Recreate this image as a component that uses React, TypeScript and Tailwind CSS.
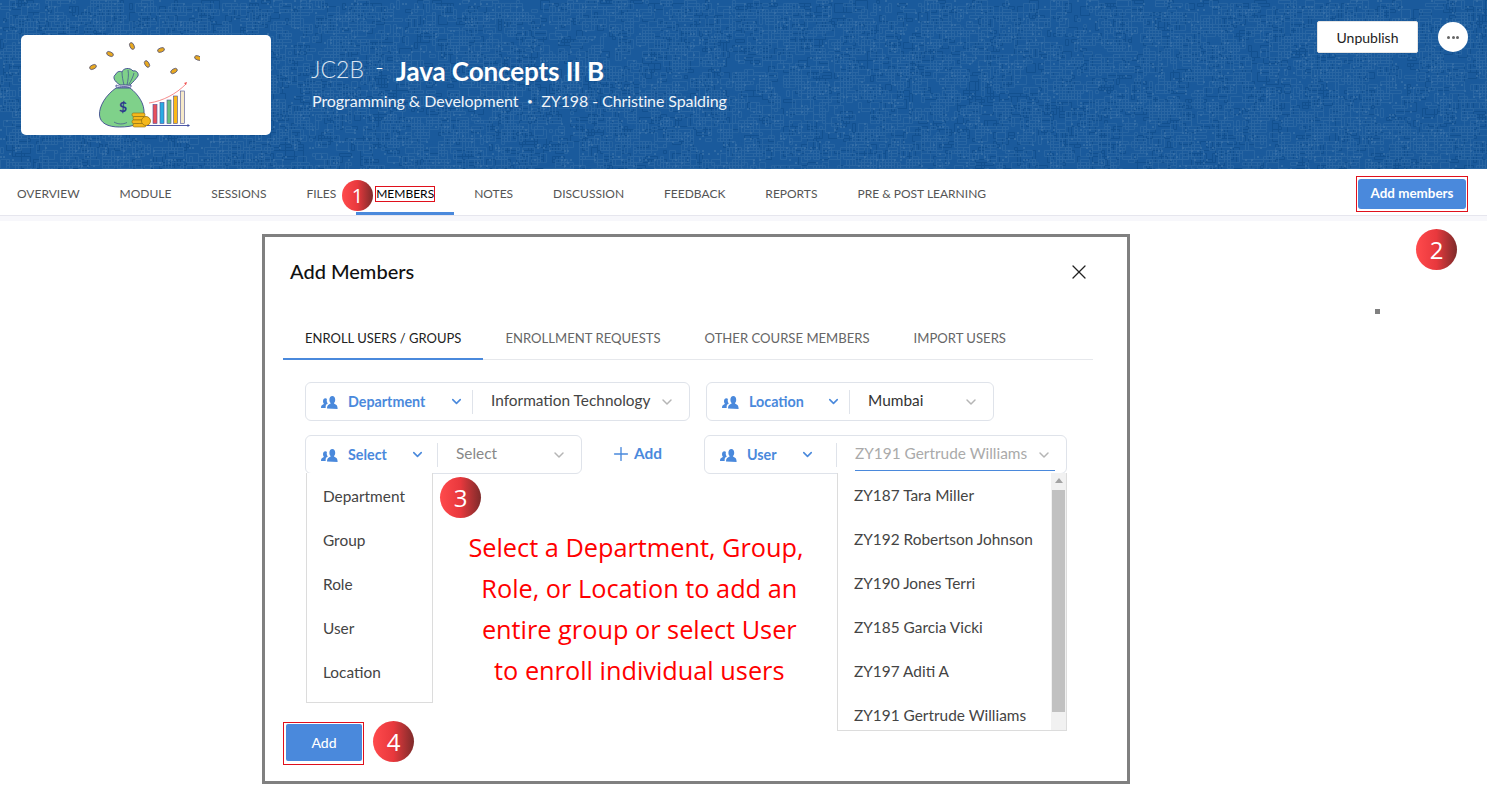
import { useMemo } from "react";
import { ChevronDown, Plus, X } from "lucide-react";

const navItems = ["OVERVIEW", "MODULE", "SESSIONS", "FILES", "MEMBERS", "NOTES", "DISCUSSION", "FEEDBACK", "REPORTS", "PRE & POST LEARNING"];
const tabs = ["ENROLL USERS / GROUPS", "ENROLLMENT REQUESTS", "OTHER COURSE MEMBERS", "IMPORT USERS"];
const typeOptions = ["Department", "Group", "Role", "User", "Location"];
const userOptions = ["ZY187 Tara Miller", "ZY192 Robertson Johnson", "ZY190 Jones Terri", "ZY185 Garcia Vicki", "ZY197 Aditi A", "ZY191 Gertrude Williams"];

// maze-like weave on the banner, seeded so it stays the same on every render
const makeTexture = () => {
  let seed = 11;
  const rnd = (n: number) => {
    seed = (seed * 16807) % 2147483647;
    return seed % n;
  };
  let light = "";
  let dark = "";
  let dots = "";
  for (let i = 0; i < 9000; i++) {
    const x = rnd(496) * 3;
    const y = rnd(57) * 3;
    if (i % 4 === 0) {
      dots += `M${x} ${y}h2v2h-2z`;
      continue;
    }
    const w = 3 + rnd(4) * 3;
    const h = 3 + rnd(3) * 3;
    const d = `M${x}.5 ${y}.5h${w}v${h}h-${w}z`;
    if (i % 4 === 1) dark += d;
    else light += d;
  }
  return { light, dark, dots };
};

const BannerTexture = () => {
  const { light, dark, dots } = useMemo(makeTexture, []);
  return (
    <svg className="absolute inset-0 h-full w-full" width="1487" height="169" aria-hidden="true">
      <path d={dark} fill="none" stroke="#12508f" strokeWidth="1" />
      <path d={light} fill="none" stroke="#2c68a4" strokeWidth="1" strokeOpacity="0.8" />
      <path d={dots} fill="#3a72aa" fillOpacity="0.7" />
    </svg>
  );
};

const Coin = ({ x, y, r }: { x: number; y: number; r: number }) => (
  <ellipse cx={x} cy={y} rx="3.6" ry="2.1" transform={`rotate(${r} ${x} ${y})`} fill="#e9a91f" stroke="#5a5a7a" strokeWidth="0.8" />
);

const CourseArt = () => (
  <svg width="130" height="100" viewBox="0 0 130 100" fill="none" aria-hidden="true">
    <Coin x={23} y={32} r={-25} />
    <Coin x={40} y={19} r={25} />
    <Coin x={62} y={11} r={65} />
    <Coin x={91} y={15} r={-20} />
    <Coin x={77} y={29} r={60} />
    <Coin x={104} y={36} r={-30} />
    <Coin x={128} y={23} r={20} />
    <path d="M50 50C44 46 42 42 46 39c1-3 5-3 6-2 1-4 8-5 11-1 3-1 6 2 5 5-2 3-5 6-8 9z" fill="#7fd18a" stroke="#3d4a8f" strokeWidth="0.9" />
    <path d="M52 37c0 4 1 9 2 13M58 35c1 5 0 10-1 15M64 38c-1 4-3 8-5 11" stroke="#3d4a8f" strokeWidth="0.7" />
    <path d="M46 50c4 2 12 2 15 0l0 2c-3 1-11 1-15 0z" fill="#fff" stroke="#3d4a8f" strokeWidth="0.8" />
    <path d="M46 53C36 60 29 71 29.500 80c.5 8 8 12 20 12 14 0 23-3 24.500-13 1-10-6-20-14-26z" fill="#7fd18a" stroke="#3d4a8f" strokeWidth="0.9" />
    <path d="M44 87c4 2.500 9 2.500 13 .5" stroke="#3d4a8f" strokeWidth="0.7" />
    <text x="53" y="77" textAnchor="middle" fontSize="14" fontWeight="700" fill="#2c3a8c" fontFamily="Lato, sans-serif">$</text>
    <rect x="62" y="78" width="13" height="3.500" rx="1.500" fill="#f5b81c" stroke="#8a6a10" strokeWidth="0.6" />
    <rect x="63" y="81.500" width="13" height="3.500" rx="1.500" fill="#f5b81c" stroke="#8a6a10" strokeWidth="0.6" />
    <rect x="62" y="85" width="13" height="3.500" rx="1.500" fill="#f5b81c" stroke="#8a6a10" strokeWidth="0.6" />
    <rect x="63" y="88.500" width="13" height="3.500" rx="1.500" fill="#f5b81c" stroke="#8a6a10" strokeWidth="0.6" />
    <circle cx="76" cy="86" r="4.500" fill="#f5b81c" stroke="#8a6a10" strokeWidth="0.7" />
    <path d="M79 68c14-2 27-9 37-19" stroke="#f57f7f" strokeWidth="0.9" />
    <path d="M117 47l-3 1 2 2z" fill="#f05050" />
    <rect x="83" y="69.500" width="4" height="19" fill="#e8505b" stroke="#4a4f96" strokeWidth="0.6" />
    <rect x="90" y="67.500" width="4" height="21" fill="#29abe2" stroke="#4a4f96" strokeWidth="0.6" />
    <rect x="97" y="65" width="4" height="23.500" fill="#6cc07c" stroke="#4a4f96" strokeWidth="0.6" />
    <rect x="103.500" y="61" width="4" height="27.500" fill="#fbb917" stroke="#4a4f96" strokeWidth="0.6" />
    <rect x="110.500" y="56" width="4" height="32.500" fill="#f6e9c8" stroke="#4a4f96" strokeWidth="0.6" />
    <path d="M77 90.500h42" stroke="#3d4a9f" strokeWidth="0.9" />
    <path d="M120 90.500l-2.500-1.500v3z" fill="#3d4a9f" />
  </svg>
);

const PeopleIcon = () => (
  <svg width="17" height="14" viewBox="0 0 17 14" fill="#4a89dc" className="shrink-0" aria-hidden="true">
    <path d="M6 13.500c0-2 .6-3.400 2-4 1-.4 1.600-.8 1.700-1.400-.9-.8-1.300-2-1.300-3.400C8.400 2.500 9.500 1 11.300 1s2.900 1.500 2.900 3.700c0 1.400-.4 2.600-1.300 3.400.1.600.7 1 1.700 1.400 1.400.6 2 2 2 4.500z" />
    <path d="M0 13c0-1.800.5-2.700 1.600-3.200.7-.3 1.200-.6 1.300-1-.6-.7-.9-1.500-.9-2.600C2 4.500 3 3.300 4.400 3.300c.6 0 1.100.2 1.600.6-.2.4-.3.9-.3 1.400 0 1.200.3 2.300 1 3.100-.1.300-.4.500-1 .8C4.600 9.900 4.600 11 4.700 13z" />
  </svg>
);

type PickerProps = {
  label: string;
  value: string;
  width: string;
  typeWidth: string;
  valueClass?: string;
  underline?: boolean;
  children?: React.ReactNode;
};

const Picker = ({ label, value, width, typeWidth, valueClass = "text-[#444]", underline, children }: PickerProps) => (
  <div className={`relative flex h-[39px] items-center rounded-[6px] border border-[#dfe3ea] bg-white ${width}`}>
    <div className={`flex h-[24px] shrink-0 items-center border-r border-[#dfe3ea] pl-[15px] ${typeWidth}`}>
      <PeopleIcon />
      <span className="ml-[10px] text-[14.300px] font-bold text-[#4a89dc]">{label}</span>
      <ChevronDown className="ml-auto h-[15px] w-[15px] text-[#4a89dc]" strokeWidth={2.5} />
    </div>
    <div className="relative flex h-full min-w-0 flex-1 items-center pl-[18px] pr-[14px]">
      <span className={`whitespace-nowrap pb-[1px] text-[15.400px] ${valueClass}`}>{value}</span>
      <ChevronDown className="ml-auto h-[16px] w-[16px] shrink-0 text-[#b5b5b5]" strokeWidth={2.2} />
      {underline && <div className="absolute bottom-[2px] left-[18px] right-[11px] h-px bg-[#4a89dc]" />}
    </div>
    {children}
  </div>
);

const StepBadge = ({ n, className }: { n: number; className: string }) => (
  <div className={`absolute flex items-center justify-center rounded-full bg-gradient-to-r from-[#ff4a4c] via-[#e8383d] to-[#7e2a2a] font-['Open_Sans',sans-serif] text-white ${className}`}>
    {n}
  </div>
);

export default function App() {
  return (
    <div className="relative h-[808px] w-[1487px] overflow-hidden bg-white [font-family:Lato,sans-serif]">
      <header className="relative flex h-[169px] bg-[#1a5a9c] pl-[21px] pt-[35px]">
        <BannerTexture />
        <div className="relative flex h-[100px] w-[250px] items-center rounded-[5px] bg-white pl-[49px]">
          <CourseArt />
        </div>
        <div className="relative ml-[40px] pt-[18px]">
          <div className="flex items-center text-white">
            <span className="-translate-y-[2px] text-[23px] font-light text-[#dbe5f1]">JC2B</span>
            <span className="ml-[11px] -translate-y-[4px] text-[24px] font-light">-</span>
            <span className="ml-[12px] text-[26px] font-bold leading-[36px] tracking-[-0.1px]">Java Concepts II B</span>
          </div>
          <div className="ml-[1px] flex items-center text-[16px] tracking-[-0.05px] text-[#eef3f9]">
            <span>Programming &amp; Development</span>
            <span className="mx-[8.500px] text-[10px]">•</span>
            <span className="tracking-[-0.1px]">ZY198 - Christine Spalding</span>
          </div>
        </div>
        <div className="relative ml-auto mr-[19px] -mt-[14px] flex h-[32px] items-center gap-[20px]">
          <button className="h-[32px] w-[101px] rounded-[2px] border border-[#e4e4e4] bg-white text-[14px] text-[#222]">Unpublish</button>
          <div className="flex h-[30px] w-[30px] items-center justify-center gap-[1.500px] rounded-full bg-white">
            <span className="h-[3px] w-[3px] rounded-full bg-[#666]" />
            <span className="h-[3px] w-[3px] rounded-full bg-[#666]" />
            <span className="h-[3px] w-[3px] rounded-full bg-[#666]" />
          </div>
        </div>
      </header>

      <nav className="flex h-[47px] items-center justify-between border-b border-[#e6e6ee] pl-[17px] pr-[19px] pt-[3px]">
        <div className="flex h-full items-center gap-10">
          {navItems.map((item) =>
            item === "MEMBERS" ? (
              <div key={item} className="-mx-5 flex h-full items-center border-b-[3px] border-[#4a89dc] px-5 pt-[3px]">
                <span className="text-[12px] leading-[14px] text-black outline outline-1 outline-[#e0101c]">{item}</span>
              </div>
            ) : (
              <span key={item} className="whitespace-nowrap text-[12px] text-[#555]">{item}</span>
            )
          )}
        </div>
        <div className="flex h-[36px] w-[112px] items-center justify-center border border-[#e0101c]">
          <button className="h-[30px] w-[108px] rounded-[3px] bg-[#4a89dc] text-[13.400px] font-bold text-white">Add members</button>
        </div>
      </nav>
      <div className="h-[5px] bg-[#f7f7fb]" />

      <section className="relative ml-[262px] mt-[13px] flex h-[550px] w-[868px] flex-col border-[3px] border-[#808080] bg-white pl-[18px] pr-[34px]">
        <div className="flex items-center justify-between pl-[7px] pt-[19px]">
          <h2 className="text-[20px] font-medium leading-[30px] text-[#111]">Add Members</h2>
          <X className="mr-[2px] h-[24px] w-[24px] translate-y-[1px] text-[#222]" strokeWidth={1.3} />
        </div>
        <div className="mt-[34px] flex h-[40px] border-b border-[#e6e8ec]">
          {tabs.map((tab, i) => (
            <div key={tab} className={`-mb-px flex h-[40px] items-center whitespace-nowrap border-b-2 px-[22px] ${i === 0 ? "border-[#4a89dc] text-[13px] text-[#222]" : "border-transparent text-[13.100px] text-[#666]"}`}>
              {tab}
            </div>
          ))}
        </div>

        <div className="mt-[22px] flex gap-[16px] pl-[22px]">
          <Picker label="Department" value="Information Technology" width="w-[385px]" typeWidth="w-[167px] pr-[8px]" />
          <Picker label="Location" value="Mumbai" width="w-[288px]" typeWidth="w-[143px] pr-[8px]" valueClass="text-[#333]" />
        </div>

        <div className="mt-[14px] flex pl-[22px]">
          <Picker label="Select" value="Select" width="w-[277px]" typeWidth="w-[132px] pr-[12px]" valueClass="text-[#888]">
            <ul className="absolute left-0 top-full w-[127px] border border-t-0 border-[#dcdcdc] bg-white pb-[7px] pt-[2px]">
              {typeOptions.map((opt) => (
                <li key={opt} className="flex h-[44px] items-center pl-[16px] text-[15.400px] text-[#444]">{opt}</li>
              ))}
            </ul>
          </Picker>
          <div className="ml-[28px] flex w-[94px] items-center gap-[2px] pb-[2px] text-[#4a89dc]">
            <Plus className="h-[22px] w-[22px]" strokeWidth={1.5} />
            <span className="text-[15.400px] font-bold">Add</span>
          </div>
          <Picker label="User" value="ZY191 Gertrude Williams" width="w-[363px]" typeWidth="w-[132px] pr-[21px]" valueClass="text-[#aaa]" underline>
            <div className="absolute left-[132px] top-[37px] flex h-[258px] w-[230px] border-x border-b border-[#dcdcdc] bg-white">
              <ul className="flex-1 overflow-hidden pl-[16px] pt-[1px]">
                {userOptions.map((opt) => (
                  <li key={opt} className="flex h-[44px] items-center whitespace-nowrap text-[15.400px] text-[#444]">{opt}</li>
                ))}
              </ul>
              <div className="flex w-[15px] flex-col items-center bg-[#f1f1f1]">
                <div className="mt-[5px] h-0 w-0 border-x-[4px] border-b-[5px] border-x-transparent border-b-[#a3a3a3]" />
                <div className="ml-[-1px] mt-[7px] h-[222px] w-[13px] bg-[#c1c1c1]" />
              </div>
            </div>
          </Picker>
        </div>

        <div className="mt-auto mb-[16px] w-fit border border-[#e0101c] pb-[3px] pl-[2px] pr-[1px] pt-[1px]">
          <button className="h-[37px] w-[76px] rounded-[2px] bg-[#4a89dc] text-[14px] font-medium text-white">Add</button>
        </div>

        <p className="absolute left-[181px] top-[290px] w-[380px] whitespace-nowrap text-center font-['Open_Sans',sans-serif] text-[25.300px] leading-[41px] text-[#f00]">
          Select a Department, Group,
          <br />
          {"\u00a0"}Role, or Location to add an
          <br />
          {"\u00a0"}entire group or select User
          <br />
          {"\u00a0"}to enroll individual users
        </p>
      </section>

      <StepBadge n={1} className="left-[342px] top-[180px] h-[31px] w-[31px] text-[20px]" />
      <StepBadge n={2} className="left-[1416px] top-[229px] h-[41px] w-[41px] text-[24px]" />
      <StepBadge n={3} className="left-[440px] top-[477px] h-[41px] w-[41px] text-[24px]" />
      <StepBadge n={4} className="left-[373px] top-[721px] h-[41px] w-[41px] text-[24px]" />
      <div className="absolute left-[1375px] top-[309px] h-[5px] w-[5px] bg-[#808080]" />
    </div>
  );
}
